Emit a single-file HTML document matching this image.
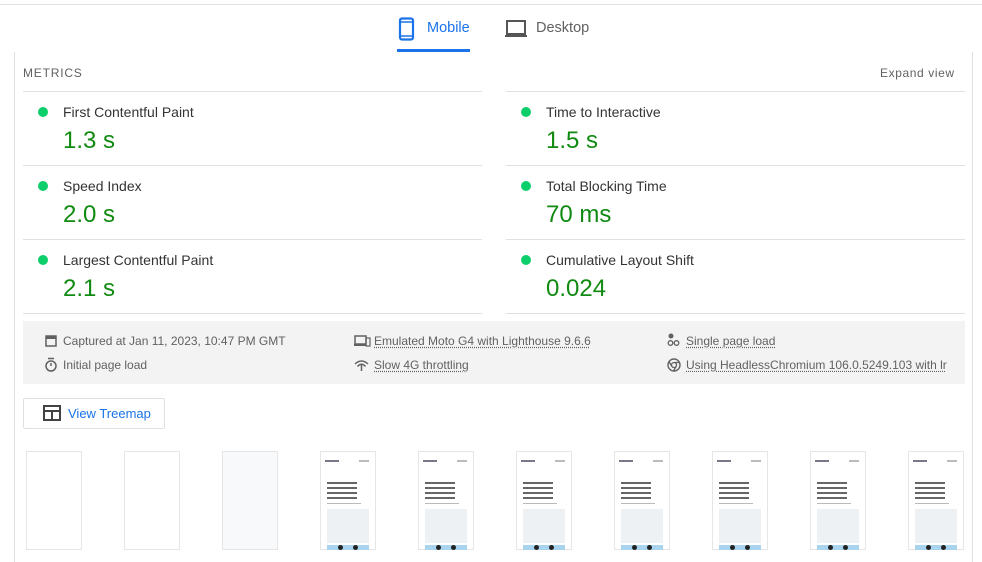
<!DOCTYPE html>
<html><head><style>
body{margin:0;width:982px;height:562px;overflow:hidden;background:#fff;font-family:"Liberation Sans",Arial,sans-serif;position:relative;color:#212121}
.a{position:absolute}
.hr{position:absolute;height:1px;background:#e0e0e0}
.lab{position:absolute;font-size:14px;color:#333}
.val{position:absolute;font-size:24px;color:#118a11}
.dot{position:absolute;width:10px;height:10px;border-radius:50%;background:#0cce6b}
.env{position:absolute;font-size:12px;color:#616161}
.u{text-decoration:underline dotted;text-underline-offset:2px}
.th{position:absolute;top:451px;width:56px;height:99px;border:1px solid #e6e6e6;background:#fff;box-sizing:border-box}
</style></head><body>
<div class="hr" style="left:0;top:4px;width:982px"></div>
<div class="a" style="left:14px;top:52px;width:1px;height:510px;background:#e0e0e0"></div>
<div class="a" style="left:972px;top:52px;width:1px;height:510px;background:#e0e0e0"></div>
<svg class="a" style="left:398px;top:17px" width="18" height="24" viewBox="0 0 18 24"><rect x="2" y="1.5" width="13" height="21" rx="2" fill="none" stroke="#1a73e8" stroke-width="2.2"/><line x1="2" y1="5" x2="15" y2="5" stroke="#1a73e8" stroke-width="1.5"/><line x1="2" y1="19" x2="15" y2="19" stroke="#1a73e8" stroke-width="1.5"/></svg>
<div class="a" style="left:427px;top:20px;font-size:14.5px;color:#1a73e8">Mobile</div>
<div class="a" style="left:397px;top:49px;width:73px;height:3px;background:#1a73e8"></div>
<svg class="a" style="left:505px;top:20px" width="22" height="18" viewBox="0 0 22 18"><rect x="2" y="1" width="18" height="13" fill="none" stroke="#555" stroke-width="2"/><rect x="0" y="15" width="22" height="2" fill="#555"/></svg>
<div class="a" style="left:536px;top:20px;font-size:14.5px;color:#616161">Desktop</div>
<div class="a" style="left:23px;top:66px;font-size:12px;letter-spacing:.8px;color:#616161">METRICS</div>
<div class="a" style="left:880px;top:66px;font-size:12px;color:#616161;letter-spacing:.6px">Expand view</div>
<div class="hr" style="left:23px;top:91px;width:459px"></div><div class="hr" style="left:506px;top:91px;width:459px"></div>
<div class="hr" style="left:23px;top:165px;width:459px"></div><div class="hr" style="left:506px;top:165px;width:459px"></div>
<div class="hr" style="left:23px;top:239px;width:459px"></div><div class="hr" style="left:506px;top:239px;width:459px"></div>
<div class="hr" style="left:23px;top:313px;width:459px"></div><div class="hr" style="left:506px;top:313px;width:459px"></div>

<div class="dot" style="left:38px;top:107px"></div><div class="lab" style="left:63px;top:104px">First Contentful Paint</div><div class="val" style="left:63px;top:127px">1.3 s</div>
<div class="dot" style="left:38px;top:181px"></div><div class="lab" style="left:63px;top:178px">Speed Index</div><div class="val" style="left:63px;top:201px">2.0 s</div>
<div class="dot" style="left:38px;top:255px"></div><div class="lab" style="left:63px;top:252px">Largest Contentful Paint</div><div class="val" style="left:63px;top:275px">2.1 s</div>
<div class="dot" style="left:521px;top:107px"></div><div class="lab" style="left:546px;top:104px">Time to Interactive</div><div class="val" style="left:546px;top:127px">1.5 s</div>
<div class="dot" style="left:521px;top:181px"></div><div class="lab" style="left:546px;top:178px">Total Blocking Time</div><div class="val" style="left:546px;top:201px">70 ms</div>
<div class="dot" style="left:521px;top:255px"></div><div class="lab" style="left:546px;top:252px">Cumulative Layout Shift</div><div class="val" style="left:546px;top:275px">0.024</div>

<div class="a" style="left:23px;top:321px;width:942px;height:63px;background:#f3f3f3"></div>
<svg class="a" style="left:45px;top:334px" width="12" height="13"><rect x="1" y="2" width="10" height="10" fill="none" stroke="#616161" stroke-width="1.5"/><rect x="1" y="2" width="10" height="3" fill="#616161"/></svg>
<div class="env" style="left:63px;top:334px">Captured at Jan 11, 2023, 10:47 PM GMT</div>
<svg class="a" style="left:44px;top:357px" width="14" height="15"><circle cx="7" cy="9" r="5" fill="none" stroke="#616161" stroke-width="1.5"/><line x1="4" y1="1.5" x2="10" y2="1.5" stroke="#616161" stroke-width="1.5"/><line x1="7" y1="9" x2="7" y2="6" stroke="#616161" stroke-width="1.5"/></svg>
<div class="env" style="left:63px;top:358px">Initial page load</div>
<svg class="a" style="left:354px;top:335px" width="17" height="12"><rect x="1" y="1" width="11" height="8" fill="none" stroke="#616161" stroke-width="1.5"/><rect x="0" y="9" width="12" height="2" fill="#616161"/><rect x="12" y="3" width="4" height="8" fill="none" stroke="#616161" stroke-width="1.2"/></svg>
<div class="env u" style="left:374px;top:334px">Emulated Moto G4 with Lighthouse 9.6.6</div>
<svg class="a" style="left:354px;top:359px" width="15" height="12"><path d="M1 5 Q7.5 -1 14 5 M3.5 7.5 Q7.5 3 11.5 7.5" fill="none" stroke="#616161" stroke-width="1.5"/><line x1="7.5" y1="6" x2="7.5" y2="12" stroke="#616161" stroke-width="1.5"/></svg>
<div class="env u" style="left:374px;top:358px">Slow 4G throttling</div>
<svg class="a" style="left:667px;top:333px" width="13" height="14"><circle cx="4" cy="3" r="2.5" fill="#616161"/><circle cx="3.5" cy="10" r="2.3" fill="none" stroke="#616161" stroke-width="1.3"/><circle cx="9.5" cy="10" r="2.3" fill="none" stroke="#616161" stroke-width="1.3"/></svg>
<div class="env u" style="left:686px;top:334px">Single page load</div>
<svg class="a" style="left:667px;top:358px" width="14" height="14"><circle cx="7" cy="7" r="6" fill="none" stroke="#616161" stroke-width="1.4"/><circle cx="7" cy="7" r="2.5" fill="none" stroke="#616161" stroke-width="1.3"/><path d="M7 4.5 H12.5 M4.8 8.3 L2 3.5 M9.2 8.3 L6.5 13" stroke="#616161" stroke-width="1.3"/></svg>
<div class="env u" style="left:686px;top:358px;white-space:nowrap;width:262px;overflow:hidden">Using HeadlessChromium 106.0.5249.103 with lr</div>

<div class="a" style="left:23px;top:398px;width:142px;height:31px;border:1px solid #e0e0e0;box-sizing:border-box;border-radius:2px"></div>
<svg class="a" style="left:43px;top:405px" width="18" height="16"><rect x="1" y="1" width="16" height="14" fill="none" stroke="#424242" stroke-width="2"/><line x1="1" y1="6" x2="17" y2="6" stroke="#424242" stroke-width="2"/><line x1="9" y1="6" x2="9" y2="15" stroke="#424242" stroke-width="2"/></svg>
<div class="a" style="left:68px;top:406px;font-size:13px;color:#1a73e8">View Treemap</div>

<div class="th" style="left:26px"></div>
<div class="th" style="left:124px"></div>
<div class="th" style="left:222px;background:#f7f9fa"></div>
<div id="t"></div>
<script>
var h='';[320,418,516,614,712,810,908].forEach(function(x){h+='<div class="th" style="left:'+x+'px"><div class="a" style="left:4px;top:8px;width:14px;height:2px;background:#778"></div><div class="a" style="left:38px;top:8px;width:10px;height:2px;background:#bbb"></div><div class="a" style="left:6px;top:30px;width:30px;height:18px;background:repeating-linear-gradient(#666 0 2px,#fff 2px 5px)"></div><div class="a" style="left:6px;top:51px;width:34px;height:1px;background:#bbb"></div><div class="a" style="left:6px;top:57px;width:42px;height:34px;background:#eef1f3"></div><div class="a" style="left:6px;top:93px;width:42px;height:5px;background:#a8d4f0"></div><div class="a" style="left:17px;top:93px;width:5px;height:5px;border-radius:50%;background:#222"></div><div class="a" style="left:32px;top:93px;width:5px;height:5px;border-radius:50%;background:#222"></div></div>'});document.getElementById('t').innerHTML=h;
</script>
</body></html>
